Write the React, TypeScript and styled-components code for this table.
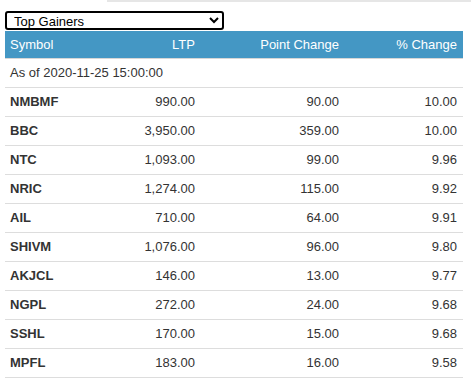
import React from "react";
import styled, { createGlobalStyle } from "styled-components";

const Global = createGlobalStyle`
  body { margin: 0; background: #fff; font-family: "Liberation Sans", Arial, sans-serif; }
`;

const Page = styled.div`
  display: flex;
  flex-direction: column;
  padding: 0 8px 0 5px;
`;

const TopRule = styled.div`
  height: 2px;
  margin-left: 102px;
  margin-right: -8px;
  background: #e6e6e6;
`;

const Select = styled.select`
  margin-top: 9px;
  width: 219px;
  height: 19px;
  font-family: "Liberation Sans", Arial, sans-serif;
  font-size: 13px;
  color: #000;
  border: 2px solid #000;
  border-radius: 3px;
  padding: 0 3px;
  background: #fff;
  box-sizing: border-box;
`;

const Table = styled.table`
  width: 458px;
  table-layout: fixed;
  border-collapse: collapse;
  font-size: 13px;
  color: #333;
  margin-top: 1px;
`;

const HeadRow = styled.tr`
  background: #4497c4;
  color: #fff;
  height: 27px;
  border-bottom: 1px solid #d6d6d6;
`;

const Th = styled.th<{ $align?: string }>`
  font-weight: normal;
  padding: ${(p) => (p.$align === "left" ? "0 6px 0 5px" : "0 6px")};
  text-align: ${(p) => p.$align || "right"};
`;

const Row = styled.tr`
  height: 29px;
  border-bottom: 1px solid #dddddd;
`;

const Td = styled.td<{ $bold?: boolean; $align?: string }>`
  padding: ${(p) => (p.$align === "left" ? "0 6px 0 5px" : "0 6px")};
  text-align: ${(p) => p.$align || "right"};
  font-weight: ${(p) => (p.$bold ? "bold" : "normal")};
`;

const rows = [
  ["NMBMF", "990.00", "90.00", "10.00"],
  ["BBC", "3,950.00", "359.00", "10.00"],
  ["NTC", "1,093.00", "99.00", "9.96"],
  ["NRIC", "1,274.00", "115.00", "9.92"],
  ["AIL", "710.00", "64.00", "9.91"],
  ["SHIVM", "1,076.00", "96.00", "9.80"],
  ["AKJCL", "146.00", "13.00", "9.77"],
  ["NGPL", "272.00", "24.00", "9.68"],
  ["SSHL", "170.00", "15.00", "9.68"],
  ["MPFL", "183.00", "16.00", "9.58"],
];

export default function App() {
  return (
    <>
      <Global />
      <Page>
        <TopRule />
        <Select defaultValue="gainers">
          <option value="gainers">Top Gainers</option>
          <option value="losers">Top Losers</option>
        </Select>
        <Table>
          <colgroup>
            <col style={{ width: 90 }} />
            <col style={{ width: 106 }} />
            <col style={{ width: 144 }} />
            <col style={{ width: 118 }} />
          </colgroup>
          <thead>
            <HeadRow>
              <Th $align="left">Symbol</Th>
              <Th>LTP</Th>
              <Th>Point Change</Th>
              <Th>% Change</Th>
            </HeadRow>
          </thead>
          <tbody>
            <Row>
              <Td $align="left" colSpan={4}>As of 2020-11-25 15:00:00</Td>
            </Row>
            {rows.map((r) => (
              <Row key={r[0]}>
                <Td $align="left" $bold>{r[0]}</Td>
                <Td>{r[1]}</Td>
                <Td>{r[2]}</Td>
                <Td>{r[3]}</Td>
              </Row>
            ))}
          </tbody>
        </Table>
      </Page>
    </>
  );
}
